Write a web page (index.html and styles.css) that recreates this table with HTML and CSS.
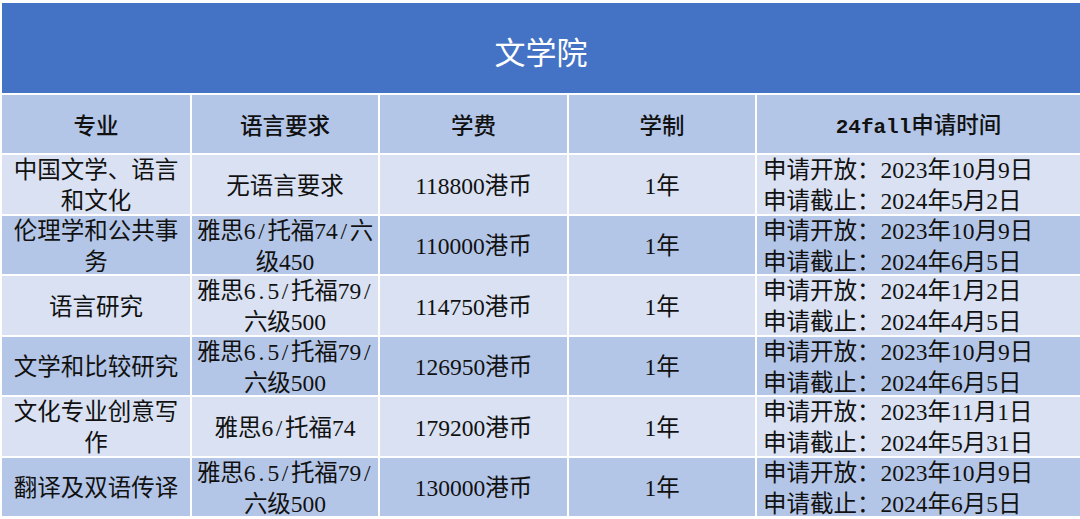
FILE: index.html
```html
<!DOCTYPE html>
<html lang="zh">
<head>
<meta charset="utf-8">
<link rel="stylesheet" href="styles.css">
</head>
<body>
<div class="sheet">
  <div class="title">文学院</div>
  <div class="grid">
    <div class="cell head"><p>专业</p></div>
    <div class="cell head"><p>语言要求</p></div>
    <div class="cell head"><p>学费</p></div>
    <div class="cell head"><p>学制</p></div>
    <div class="cell head"><p><span class="mono">24fall</span>申请时间</p></div>

    <div class="cell light"><p>中国文学、语言<br>和文化</p></div>
    <div class="cell light"><p>无语言要求</p></div>
    <div class="cell light"><p>118800港币</p></div>
    <div class="cell light"><p>1年</p></div>
    <div class="cell light dates"><p>申请开放：2023年10月9日<br>申请截止：2024年5月2日</p></div>

    <div class="cell dark"><p>伦理学和公共事<br>务</p></div>
    <div class="cell dark"><p>雅思6<span class="hw">/</span>托福74<span class="hw">/</span>六<br>级450</p></div>
    <div class="cell dark"><p>110000港币</p></div>
    <div class="cell dark"><p>1年</p></div>
    <div class="cell dark dates"><p>申请开放：2023年10月9日<br>申请截止：2024年6月5日</p></div>

    <div class="cell light"><p>语言研究</p></div>
    <div class="cell light"><p>雅思6<span class="hw">.</span>5<span class="hw">/</span>托福79<span class="hw">/</span><br>六级500</p></div>
    <div class="cell light"><p>114750港币</p></div>
    <div class="cell light"><p>1年</p></div>
    <div class="cell light dates"><p>申请开放：2024年1月2日<br>申请截止：2024年4月5日</p></div>

    <div class="cell dark"><p>文学和比较研究</p></div>
    <div class="cell dark"><p>雅思6<span class="hw">.</span>5<span class="hw">/</span>托福79<span class="hw">/</span><br>六级500</p></div>
    <div class="cell dark"><p>126950港币</p></div>
    <div class="cell dark"><p>1年</p></div>
    <div class="cell dark dates"><p>申请开放：2023年10月9日<br>申请截止：2024年6月5日</p></div>

    <div class="cell light"><p>文化专业创意写<br>作</p></div>
    <div class="cell light"><p>雅思6<span class="hw">/</span>托福74</p></div>
    <div class="cell light"><p>179200港币</p></div>
    <div class="cell light"><p>1年</p></div>
    <div class="cell light dates"><p>申请开放：2023年11月1日<br>申请截止：2024年5月31日</p></div>

    <div class="cell dark"><p>翻译及双语传译</p></div>
    <div class="cell dark"><p>雅思6<span class="hw">.</span>5<span class="hw">/</span>托福79<span class="hw">/</span><br>六级500</p></div>
    <div class="cell dark"><p>130000港币</p></div>
    <div class="cell dark"><p>1年</p></div>
    <div class="cell dark dates"><p>申请开放：2023年10月9日<br>申请截止：2024年6月5日</p></div>
  </div>
</div>
</body>
</html>
```

FILE: styles.css
```css
html, body {
  margin: 0;
  padding: 0;
  background: #ffffff;
}
body {
  font-family: "Liberation Serif", "Noto Sans CJK SC", serif;
  color: #111111;
  overflow: hidden;
}
.sheet {
  padding: 3px 0 0 2px;
  width: 1078px;
  display: flex;
  flex-direction: column;
  gap: 2px;
}
.title {
  height: 90px;
  background: #4472c4;
  color: #ffffff;
  font-size: 31px;
  display: flex;
  align-items: center;
  justify-content: center;
  padding-top: 4px;
  box-sizing: border-box;
}
.grid {
  display: grid;
  grid-template-columns: 188px 186px 187px 186px 323px;
  grid-template-rows: 58px;
  grid-auto-rows: 58.5px;
  gap: 2px;
}
.cell {
  display: flex;
  align-items: center;
  justify-content: center;
  text-align: center;
  font-size: 23.5px;
  line-height: 31px;
  white-space: nowrap;
  overflow: visible;
  padding-top: 4px;
  box-sizing: border-box;
}
.cell p {
  margin: 0;
}
.head {
  background: #b4c6e7;
  font-weight: 500;
  font-size: 22.5px;
  padding-top: 4px;
}
.mono {
  font-family: "Liberation Mono", monospace;
  font-weight: 700;
  font-size: 21px;
}
.hw {
  display: inline-block;
  width: 0.5em;
  text-align: center;
}
.light {
  background: #d9e1f2;
}
.dark {
  background: #b4c6e7;
}
.dates {
  justify-content: flex-start;
  text-align: left;
  padding-left: 6px;
}
```
